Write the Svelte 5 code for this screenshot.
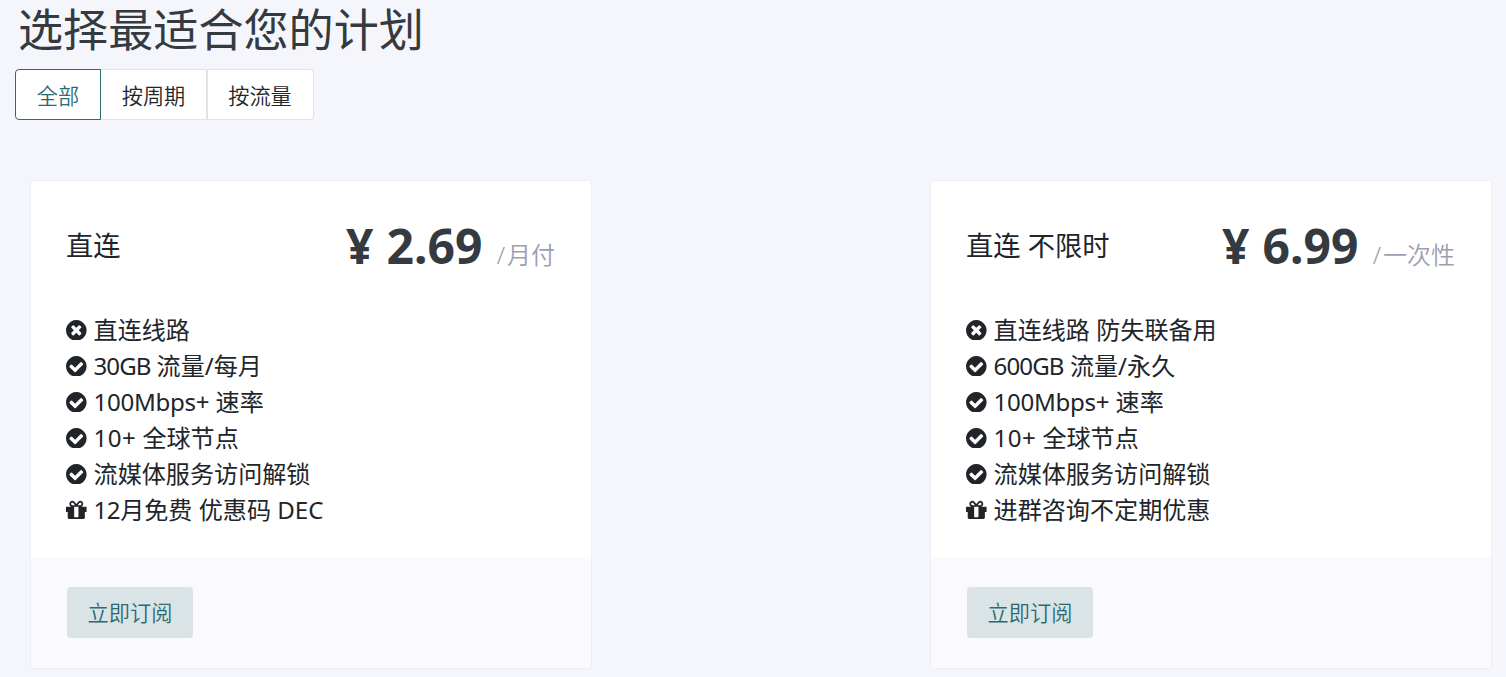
<main>
    <h1>选择最适合您的计划</h1>

    <div class="tabs">
        {#each tabs as tab, i}
            <button class:active={i === current} onclick={() => current = i}>{tab}</button>
        {/each}
    </div>

    <div class="plans">
        {#each plans as plan}
            <section class="plan">
                <div class="content">
                    <header>
                        <h3>{plan.name}</h3>
                        <div class="price">
                            <strong><span class="yen">¥</span>{plan.price}</strong>
                            <small><i>/</i>{plan.period}</small>
                        </div>
                    </header>

                    <ul>
                        {#each plan.features as [icon, text, amount = "", tracking = 0]}
                            <li>
                                <svg viewBox="128 128 1536 1536"><path d={icons[icon]} /></svg>
                                <span><span style:letter-spacing="{tracking}px">{amount}</span>{text}</span>
                            </li>
                        {/each}
                    </ul>
                </div>

                <footer>
                    <button class="subscribe">立即订阅</button>
                </footer>
            </section>
        {/each}
    </div>
</main>

<script lang="ts">
    type Icon = "times" | "check" | "gift";
    type Plan = {
        name: string;
        price: string;
        period: string;
        // icon, text, leading amount and its letter spacing
        features: [Icon, string, string?, number?][];
    };

    const tabs = ["全部", "按周期", "按流量"];
    let current = $state(0);

    const plans: Plan[] = [
        {
            name: "直连",
            price: "2.69",
            period: "月付",
            features: [
                ["times", "直连线路"],
                ["check", " 流量/每月", "30GB", -1],
                ["check", " 速率", "100Mbps+", -0.3],
                ["check", " 全球节点", "10+", 0.4],
                ["check", "流媒体服务访问解锁"],
                ["gift", "月免费 优惠码 DEC", "12", -0.5],
            ],
        },
        {
            name: "直连 不限时",
            price: "6.99",
            period: "一次性",
            features: [
                ["times", "直连线路 防失联备用"],
                ["check", " 流量/永久", "600GB", -0.9],
                ["check", " 速率", "100Mbps+", -0.3],
                ["check", " 全球节点", "10+", 0.4],
                ["check", "流媒体服务访问解锁"],
                ["gift", "进群咨询不定期优惠"],
            ],
        },
    ];

    const disc = "q0 209-103 385.5t-279.5 279.5-385.5 103-385.5-103-279.5-279.5-103-385.5 103-385.5 279.5-279.5 385.5-103 385.5 103 279.5 279.5 103 385.5z";

    const icons: Record<Icon, string> = {
        times: "M1277 1122q0-26-19-45l-181-181 181-181q19-19 19-45 0-27-19-46l-90-90q-19-19-46-19-26 0-45 19l-181 181-181-181q-19-19-45-19-27 0-46 19l-90 90q-19 19-19 46 0 26 19 45l181 181-181 181q-19 19-19 45 0 27 19 46l90 90q19 19 46 19 26 0 45-19l181-181 181 181q19 19 45 19 27 0 46-19l90-90q19-19 19-46zm387-226" + disc,
        check: "M1412 734q0-28-18-46l-91-90q-19-19-45-19t-45 19l-408 407-226-226q-19-19-45-19t-45 19l-91 90q-18 18-18 46 0 27 18 45l362 362q19 19 45 19 27 0 46-19l543-543q18-18 18-45zm252 162" + disc,
        gift: "M1056 1356v-716h-320v716q0 25 18 38.5t46 13.5h192q28 0 46-13.5t18-38.5zm-456-844h195l-126-161q-26-31-69-31-40 0-68 28t-28 68 28 68 68 28zm688-96q0-40-28-68t-68-28q-43 0-69 31l-125 161h194q40 0 68-28t28-68zm376 256v320q0 14-9 23t-23 9h-96v416q0 40-28 68t-68 28h-1088q-40 0-68-28t-28-68v-416h-96q-14 0-23-9t-9-23v-320q0-14 9-23t23-9h440q-93 0-158.5-65.5t-65.5-158.5 65.5-158.5 158.5-65.5q107 0 168 77l128 165 128-165q61-77 168-77 93 0 158.5 65.5t65.5 158.5-65.5 158.5-158.5 65.5h440q14 0 23 9t9 23z",
    };
</script>

<style>
    :global(body) {
        margin: 0;
        background: #f5f6fc;
    }

    main {
        box-sizing: border-box;
        height: 677px;
        padding: 0 14px 0 15px;
        overflow: hidden;
        color: #212529;
        font-family: "Noto Sans", "Noto Sans CJK SC", sans-serif;
        font-size: 24px;
    }

    h1 {
        margin: 0;
        padding: 0 3px;
        height: 69px;
        line-height: 60px;
        font-size: 45.1px;
        font-weight: 370;
        color: #343a40;
    }

    button {
        box-sizing: border-box;
        height: 51px;
        padding: 0;
        font: 340 21.2px/51px "Noto Sans", "Noto Sans CJK SC", sans-serif;
        text-align: center;
        cursor: pointer;
    }

    .tabs {
        display: flex;
    }

    .tabs button {
        width: 106px;
        border: 1px solid #e1e1e8;
        border-left: 0;
        background: #fff;
        color: #212529;
    }

    .tabs button:first-child {
        width: 86px;
        border-radius: 4px 0 0 4px;
    }

    .tabs button:last-child {
        width: 107px;
        border-radius: 0 4px 4px 0;
        box-shadow: inset 1px 0 #e1e1e8;
    }

    .tabs .active {
        border: 1px solid #2b6a70;
        color: #2b6a70;
    }

    .plans {
        display: flex;
        justify-content: space-between;
        padding: 60px 0 0 15px;
    }

    .plan {
        box-sizing: border-box;
        width: 562px;
        height: 489px;
        border: 1px solid #eeeff4;
        border-radius: 4px;
        background: #fff;
        overflow: hidden;
    }

    .content {
        box-sizing: border-box;
        height: 376px;
        padding: 30px 36px 0 35px;
    }

    header {
        display: flex;
        justify-content: space-between;
        height: 101px;
    }

    h3 {
        margin: 0;
        font-size: 27.3px;
        line-height: 70px;
        font-weight: 380;
    }

    .price {
        line-height: 70px;
        color: #343a40;
    }

    strong {
        font-size: 48px;
        font-weight: 700;
    }

    .yen {
        margin-right: 13px;
    }

    small {
        margin-left: 8px;
        font-size: 24px;
        font-weight: 350;
        color: #9b9eb0;
    }

    i {
        margin-right: 2px;
        font-style: normal;
    }

    ul {
        margin: 0;
        padding: 0;
        list-style: none;
    }

    li {
        display: flex;
        align-items: center;
        height: 36px;
        line-height: 36px;
        font-size: 24.1px;
        white-space: nowrap;
    }

    svg {
        width: 20.6px;
        height: 20.6px;
        margin: 0 6.6px 0 0.4px;
        fill: currentColor;
    }

    footer {
        height: 111px;
        padding: 30px 36px 0;
        background: #fafafc;
    }

    .subscribe {
        display: block;
        width: 126px;
        border: 0;
        border-radius: 4px;
        background: #dae3e6;
        color: #2b6a70;
    }
</style>
